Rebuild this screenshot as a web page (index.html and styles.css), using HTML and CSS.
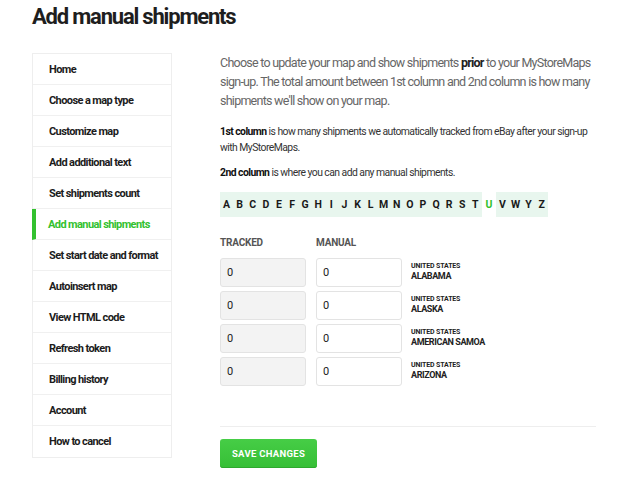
FILE: index.html
```html
<!DOCTYPE html>
<html>
<head>
<meta charset="utf-8">
<link rel="stylesheet" href="styles.css">
</head>
<body>
<h1 class="title">Add manual shipments</h1>
<div class="layout">
  <nav class="sidebar">
    <a class="nav-item">Home</a>
    <a class="nav-item">Choose a map type</a>
    <a class="nav-item">Customize map</a>
    <a class="nav-item">Add additional text</a>
    <a class="nav-item">Set shipments count</a>
    <a class="nav-item active">Add manual shipments</a>
    <a class="nav-item">Set start date and format</a>
    <a class="nav-item">Autoinsert map</a>
    <a class="nav-item">View HTML code</a>
    <a class="nav-item">Refresh token</a>
    <a class="nav-item">Billing history</a>
    <a class="nav-item">Account</a>
    <a class="nav-item">How to cancel</a>
  </nav>
  <main class="content">
    <p class="lead"><span>Choose to update your map and show shipments </span><b>prior</b><span> to your MyStoreMaps</span> <span>sign-up. The total amount between 1st column and 2nd column is how many shipments we'll show on your map.</span></p>
    <p class="note"><b>1st column</b><span> is how many shipments we automatically tracked from eBay after your sign-up</span> <span>with MyStoreMaps.</span></p>
    <p class="note"><b>2nd column</b><span> is where you can add any manual shipments.</span></p>
    <div class="alpha">
      <span>A</span><span>B</span><span>C</span><span>D</span><span>E</span><span>F</span><span>G</span><span>H</span><span>I</span><span>J</span><span>K</span><span>L</span><span>M</span><span>N</span><span>O</span><span>P</span><span>Q</span><span>R</span><span>S</span><span>T</span><span class="on">U</span><span>V</span><span>W</span><span>Y</span><span>Z</span>
    </div>
    <div class="heads"><span class="col">TRACKED</span><span class="col">MANUAL</span></div>
    <div class="rows">
      <div class="row"><div class="field ro">0</div><div class="field">0</div><div class="loc"><small>UNITED STATES</small><strong>ALABAMA</strong></div></div>
      <div class="row"><div class="field ro">0</div><div class="field">0</div><div class="loc"><small>UNITED STATES</small><strong>ALASKA</strong></div></div>
      <div class="row"><div class="field ro">0</div><div class="field">0</div><div class="loc"><small>UNITED STATES</small><strong>AMERICAN SAMOA</strong></div></div>
      <div class="row"><div class="field ro">0</div><div class="field">0</div><div class="loc"><small>UNITED STATES</small><strong>ARIZONA</strong></div></div>
    </div>
    <hr class="sep">
    <button class="save">SAVE CHANGES</button>
  </main>
</div>
</body>
</html>
```
FILE: styles.css
```css
* { box-sizing: border-box; }
html, body { margin: 0; padding: 0; background: #fff; }
body {
  font-family: Roboto, "Liberation Sans", sans-serif;
  color: #222;
  padding: 0 32px;
  overflow: hidden;
}
.title {
  margin: 0;
  padding-top: 3px;
  font-size: 22px;
  line-height: 28px;
  font-weight: 700;
  color: #1e1e1e;
  letter-spacing: -1.2px;
}
.layout {
  display: flex;
  align-items: flex-start;
  gap: 48px;
  margin-top: 22px;
}
.sidebar {
  width: 140px;
  flex: none;
  display: flex;
  flex-direction: column;
  border: 1px solid #eee;
}
.nav-item {
  display: flex;
  align-items: center;
  height: 31px;
  padding-left: 16px;
  font-size: 11px;
  font-weight: 700;
  color: #1c1c1c;
  border-bottom: 1px solid #f0f0f0;
  letter-spacing: -0.6px;
  white-space: nowrap;
}
.nav-item:last-child { border-bottom: 0; }
.nav-item.active {
  color: #33c12f;
  border-left: 4px solid #33c12f;
  padding-left: 12px;
  margin-left: -1px;
}
.content {
  width: 378px;
}
.lead {
  margin: 0;
  font-size: 12.5px;
  line-height: 19px;
  color: #666;
  font-weight: 400;
  letter-spacing: -0.75px;
}
.lead b { color: #222; font-weight: 700; display: inline-block; }
.note {
  margin: 14px 0 0;
  font-size: 10.4px;
  line-height: 16px;
  color: #333;
  letter-spacing: -0.55px;
}
.note + .note { margin-top: 9px; }
.note b { font-weight: 700; color: #111; display: inline-block; }
.alpha {
  display: flex;
  margin-top: 11px;
  width: fit-content;
}
.alpha span {
  width: 13.1px;
  height: 25px;
  display: flex;
  align-items: center;
  justify-content: center;
  background: #e8f6ee;
  font-size: 10.5px;
  font-weight: 700;
  color: #1a1a1a;
}
.alpha span.on { background: #fff; color: #33c12f; width: 14px; }
.heads {
  display: flex;
  gap: 10px;
  margin-top: 20px;
}
.heads .col {
  width: 86px;
  font-size: 10px;
  font-weight: 700;
  color: #555;
  letter-spacing: -0.2px;
}
.rows {
  display: flex;
  flex-direction: column;
  gap: 4px;
  margin-top: 10px;
}
.row {
  display: flex;
  align-items: center;
  gap: 10px;
}
.field {
  width: 86px;
  height: 29px;
  border: 1px solid #e3e3e3;
  border-radius: 3px;
  background: #fff;
  display: flex;
  align-items: center;
  padding-left: 6px;
  font-size: 11px;
  color: #222;
}
.field.ro { background: #f3f3f3; }
.loc {
  display: flex;
  flex-direction: column;
  margin-left: -1px;
  margin-top: -2px;
}
.loc small {
  font-size: 7px;
  font-weight: 700;
  color: #222;
  line-height: 9px;
  letter-spacing: -0.15px;
}
.loc strong {
  font-size: 9px;
  font-weight: 700;
  color: #222;
  line-height: 11px;
  letter-spacing: -0.4px;
}
.sep {
  border: 0;
  border-top: 1px solid #eee;
  margin: 40px 2px 0 0;
}
.save {
  margin-top: 12px;
  width: 97px;
  height: 29px;
  border: 0;
  border-radius: 3px;
  background: linear-gradient(#46cd46, #36bf36);
  box-shadow: inset 0 -1px 0 #2ea82e;
  color: #fff;
  font-family: Roboto, "Liberation Sans", sans-serif;
  font-size: 9.5px;
  font-weight: 700;
  letter-spacing: 0.3px;
  padding: 0;
}
```
